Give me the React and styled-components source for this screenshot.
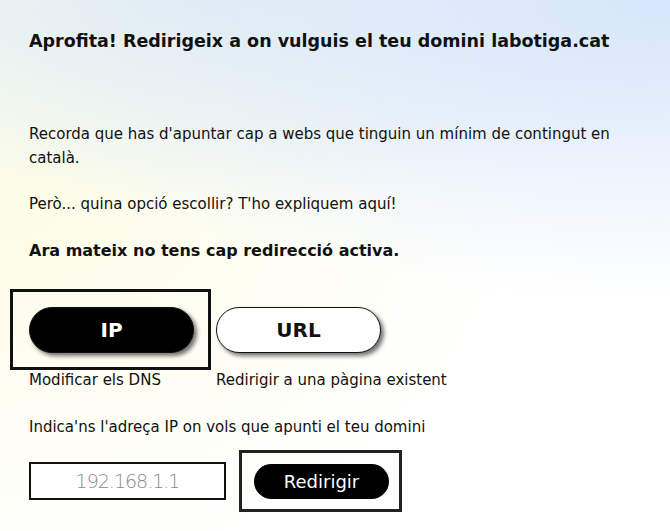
import React, { useState } from 'react'
import styled, { createGlobalStyle } from 'styled-components'

const GlobalStyle = createGlobalStyle`
  html, body {
    margin: 0;
    padding: 0;
  }
  body {
    font-family: "DejaVu Sans", "Liberation Sans", sans-serif;
    color: #111;
    min-height: 531px;
    background:
      radial-gradient(ellipse 760px 300px at 100% 0%, rgba(214,230,251,1) 0%, rgba(214,230,251,0) 100%),
      radial-gradient(ellipse 760px 200px at 30% 0%, rgba(224,236,240,0.8) 0%, rgba(224,236,240,0) 100%),
      radial-gradient(ellipse 520px 380px at 0% 38%, rgba(252,252,230,1) 0%, rgba(252,252,230,0) 100%),
      #ffffff;
  }
`

const Page = styled.div`
  padding: 28px 29px 0 29px;
  height: 531px;
  box-sizing: border-box;
`

const Title = styled.h2`
  margin: 0;
  font-size: 17.5px;
  font-weight: 700;
  line-height: 26px;
`

const Text = styled.p`
  margin: ${p => p.top || 0}px 0 0 0;
  font-size: 15px;
  line-height: 24px;
`

const Status = styled.p`
  margin: 23px 0 0 0;
  font-size: 16px;
  font-weight: 700;
  line-height: 24px;
`

const Options = styled.div`
  display: flex;
  gap: 5px;
  margin: 26px 0 0 -19px;
`

const Option = styled.div`
  display: flex;
  flex-direction: column;
`

const Frame = styled.div`
  border: ${p => (p.active ? '3px solid #111' : 'none')};
  padding: ${p => (p.active ? '15px 14px 14px 16px' : '18px 0 17px 0')};
`

const Pill = styled.button`
  display: block;
  width: 165px;
  height: 46px;
  border-radius: 23px;
  border: 1px solid #111;
  background: ${p => (p.active ? '#000' : '#fff')};
  color: ${p => (p.active ? '#fff' : '#111')};
  font-family: inherit;
  font-size: 20px;
  font-weight: 700;
  box-shadow: 3px 3px 4px rgba(0, 0, 0, 0.55);
  cursor: pointer;
`

const Caption = styled.span`
  font-size: 15px;
  line-height: 20px;
  padding-left: ${p => (p.active ? 19 : 0)}px;
`

const Hint = styled(Text)`
  margin-top: 25px;
`

const Form = styled.div`
  display: flex;
  align-items: center;
  gap: 13px;
  margin-top: 11px;
`

const IpInput = styled.input`
  width: 197px;
  height: 38px;
  box-sizing: border-box;
  border: 2px solid #111;
  background: #fff;
  text-align: center;
  font-family: inherit;
  font-size: 19px;
  letter-spacing: -1px;
  font-weight: 300;
  outline: none;
  &::placeholder {
    color: #8a8a8a;
  }
`

const SubmitFrame = styled.div`
  border: 3px solid #222;
  padding: 11px 10px 10px 12px;
`

const Submit = styled.button`
  display: block;
  width: 135px;
  height: 35px;
  border-radius: 18px;
  border: none;
  background: #000;
  color: #fff;
  font-family: inherit;
  font-size: 18px;
  cursor: pointer;
`

export default function App() {
  const [mode, setMode] = useState('ip')
  return (
    <>
      <GlobalStyle />
      <Page>
        <Title>Aprofita! Redirigeix a on vulguis el teu domini labotiga.cat</Title>
        <Text top={68}>
          Recorda que has d'apuntar cap a webs que tinguin un mínim de contingut en català.
        </Text>
        <Text top={22}>Però... quina opció escollir? T'ho expliquem aquí!</Text>
        <Status>Ara mateix no tens cap redirecció activa.</Status>
        <Options>
          <Option>
            <Frame active={mode === 'ip'}>
              <Pill active={mode === 'ip'} onClick={() => setMode('ip')}>IP</Pill>
            </Frame>
            <Caption active={mode === 'ip'}>Modificar els DNS</Caption>
          </Option>
          <Option>
            <Frame active={mode === 'url'}>
              <Pill active={mode === 'url'} onClick={() => setMode('url')}>URL</Pill>
            </Frame>
            <Caption active={mode === 'url'}>Redirigir a una pàgina existent</Caption>
          </Option>
        </Options>
        <Hint>Indica'ns l'adreça IP on vols que apunti el teu domini</Hint>
        <Form>
          <IpInput placeholder="192.168.1.1" />
          <SubmitFrame>
            <Submit>Redirigir</Submit>
          </SubmitFrame>
        </Form>
      </Page>
    </>
  )
}
